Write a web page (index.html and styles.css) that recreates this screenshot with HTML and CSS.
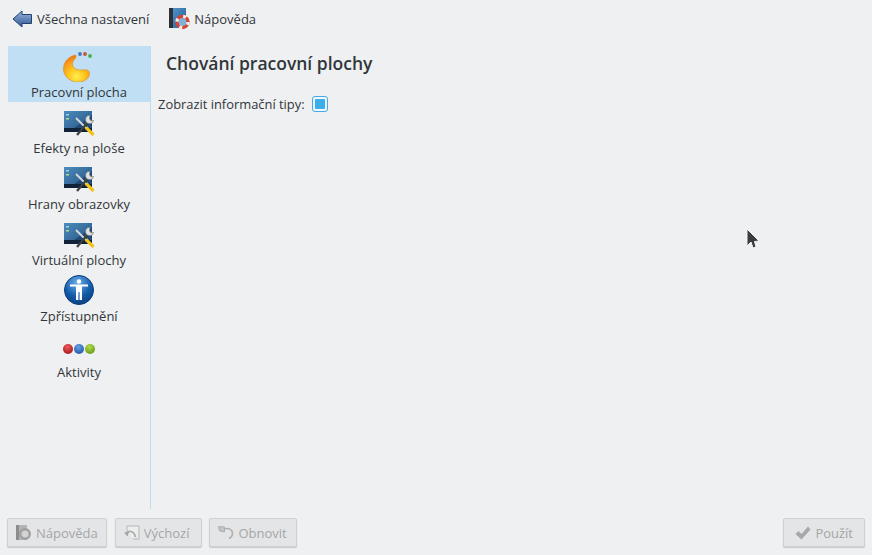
FILE: index.html
```html
<!DOCTYPE html>
<html lang="cs">
<head>
    <meta charset="UTF-8">
    <meta name="viewport" content="width=device-width, initial-scale=1.0">
    <title>Chování pracovní plochy</title>
    <link rel="stylesheet" href="styles.css">
</head>
<body>
    <svg class="defs" width="0" height="0">
        <defs>
            <linearGradient id="screenGrad" x1="0" y1="0" x2="1" y2="1">
                <stop offset="0" stop-color="#4c8cbf"/>
                <stop offset="1" stop-color="#24507c"/>
            </linearGradient>
            <radialGradient id="flame" cx="0.5" cy="0.8" r="0.75">
                <stop offset="0" stop-color="#fff04a"/>
                <stop offset="0.45" stop-color="#fdc21e"/>
                <stop offset="0.85" stop-color="#f8931a"/>
                <stop offset="1" stop-color="#ee7a12"/>
            </radialGradient>
            <radialGradient id="blueBall" cx="0.45" cy="0.25" r="0.85">
                <stop offset="0" stop-color="#6db0ec"/>
                <stop offset="0.55" stop-color="#125ba8"/>
                <stop offset="1" stop-color="#0a3a76"/>
            </radialGradient>
            <radialGradient id="redDot" cx="0.45" cy="0.3" r="0.8">
                <stop offset="0" stop-color="#ee5a5a"/>
                <stop offset="1" stop-color="#9c0f14"/>
            </radialGradient>
            <radialGradient id="blueDot" cx="0.45" cy="0.3" r="0.8">
                <stop offset="0" stop-color="#66a0e8"/>
                <stop offset="1" stop-color="#1a4fa0"/>
            </radialGradient>
            <radialGradient id="greenDot" cx="0.45" cy="0.3" r="0.8">
                <stop offset="0" stop-color="#b4dc4a"/>
                <stop offset="1" stop-color="#5c9410"/>
            </radialGradient>
            <linearGradient id="arrowGrad" x1="0" y1="0" x2="0" y2="1">
                <stop offset="0" stop-color="#9ab8e0"/>
                <stop offset="1" stop-color="#2f5590"/>
            </linearGradient>
            <linearGradient id="bookGrad" x1="0" y1="0" x2="1" y2="1">
                <stop offset="0" stop-color="#4d90c8"/>
                <stop offset="1" stop-color="#2a5f94"/>
            </linearGradient>
            <symbol id="tools" viewBox="0 0 32 26">
                <rect x="1" y="1" width="28" height="21" fill="url(#screenGrad)"/>
                <path d="M10 19 L29 5 V19 Z" fill="#1f4a74"/>
                <rect x="1" y="18" width="28" height="4" fill="#0f2238"/>
                <rect x="3" y="4" width="3" height="1.5" fill="#a8ccdc"/>
                <rect x="3" y="8" width="3" height="1.5" fill="#c7d67a"/>
                <path d="M13 8 L24 19" stroke="#d4d7d9" stroke-width="2"/>
                <path d="M14 25 L26 11" stroke="#3a3f43" stroke-width="2.2"/>
                <path d="M23 17.5 L30.5 25" stroke="#f2c21a" stroke-width="3.2"/>
                <path d="M27 5.5 a4 4 0 1 0 3.5 5 l-2.6 0.3 -1.4 -2.2 z" fill="#dfe1e2" stroke="#777c80" stroke-width="0.7"/>
            </symbol>
        </defs>
    </svg>

    <div class="toolbar">
        <div class="tool">
            <svg width="20" height="18" viewBox="0 0 20 18">
                <path d="M1 9 L10 1 V4.5 H19.5 V13.5 H10 V17 Z" fill="url(#arrowGrad)" stroke="#23406f" stroke-width="1"/>
            </svg>
            <span>Všechna nastavení</span>
        </div>
        <div class="tool">
            <svg class="help-icon" width="22" height="22" viewBox="0 0 22 22">
                <rect x="0" y="0" width="4" height="20" fill="#2c3238"/>
                <rect x="4" y="0" width="13" height="20" fill="url(#bookGrad)"/>
                <circle cx="13.5" cy="14" r="5.6" fill="#7fb0d6" stroke="#d8422e" stroke-width="3.2"/>
                <circle cx="13.5" cy="14" r="5.6" fill="none" stroke="#f4f0ea" stroke-width="3.2" stroke-dasharray="3 5.8"/>
            </svg>
            <span>Nápověda</span>
        </div>
    </div>

    <div class="main">
        <div class="sidebar">
            <div class="nav-item active">
                <svg width="32" height="32" viewBox="0 0 32 32">
                    <path d="M12 5 C5 7 0.5 12 0.5 19 C0.5 27 8 32 15 32 C22 32 26.5 28 26.5 23.5 C26.5 20 23.5 19.5 20 20 C15 20.5 10.5 19 9.5 15 C9 11 12.5 9 13 7 C13.2 6 13 5 12 5 Z" fill="url(#flame)" stroke="#e58316" stroke-width="0.6"/>
                    <circle cx="17" cy="4" r="1.9" fill="#3f78c4"/>
                    <circle cx="22" cy="4" r="1.9" fill="#c9532e"/>
                    <circle cx="27" cy="6" r="1.9" fill="#3fb24a"/>
                </svg>
                <span>Pracovní plocha</span>
            </div>
            <div class="nav-item">
                <svg width="32" height="26" class="tools-icon"><use href="#tools"/></svg>
                <span>Efekty na ploše</span>
            </div>
            <div class="nav-item">
                <svg width="32" height="26" class="tools-icon"><use href="#tools"/></svg>
                <span>Hrany obrazovky</span>
            </div>
            <div class="nav-item">
                <svg width="32" height="26" class="tools-icon"><use href="#tools"/></svg>
                <span>Virtuální plochy</span>
            </div>
            <div class="nav-item">
                <svg class="ball-icon" width="30" height="30" viewBox="0 0 30 30">
                    <circle cx="15" cy="15" r="14.5" fill="url(#blueBall)" stroke="#0b3c78"/>
                    <circle cx="15" cy="6.5" r="2.2" fill="#fff"/>
                    <path d="M6 9.5 H24 V11.5 H18 V25 H15.6 V17 H14.4 V25 H12 V11.5 H6 Z" fill="#fff"/>
                </svg>
                <span>Zpřístupnění</span>
            </div>
            <div class="nav-item">
                <svg width="32" height="32" viewBox="0 0 32 32">
                    <circle cx="5" cy="19" r="5" fill="url(#redDot)"/>
                    <circle cx="16" cy="19" r="5" fill="url(#blueDot)"/>
                    <circle cx="27" cy="19" r="5" fill="url(#greenDot)"/>
                </svg>
                <span>Aktivity</span>
            </div>
        </div>

        <div class="content">
            <h1>Chování pracovní plochy</h1>
            <div class="option">
                <span>Zobrazit informační tipy:</span>
                <span class="checkbox"><span class="check-fill"></span></span>
            </div>
        </div>
    </div>

    <div class="footer">
        <div class="footer-group">
            <div class="btn btn-help">
                <svg width="16" height="16" viewBox="0 0 16 16">
                    <rect x="0" y="0" width="3" height="15" fill="#8c8c8c"/>
                    <rect x="3" y="0" width="8" height="15" fill="#b4b4b4"/>
                    <circle cx="9" cy="9" r="4.8" fill="#d4d4d4" stroke="#a0a0a0" stroke-width="2.4"/>
                </svg>
                <span>Nápověda</span>
            </div>
            <div class="btn btn-default">
                <svg width="16" height="16" viewBox="0 0 16 16">
                    <path d="M3 6 V1 H15 V14 H9" fill="#eceded" stroke="#b5b5b5"/>
                    <path d="M1.5 9 C4 5 10 5.5 11.5 12" fill="none" stroke="#a6a6a6" stroke-width="1.6"/>
                    <path d="M0 7.5 L5 7 L3.5 11.5 Z" fill="#a6a6a6"/>
                </svg>
                <span>Výchozí</span>
            </div>
            <div class="btn btn-restore">
                <svg width="16" height="16" viewBox="0 0 16 16">
                    <path d="M5 4.5 C10 2 15 4.5 14.5 9 C14.3 11 13 12.5 11 13.5" fill="none" stroke="#b0b0b0" stroke-width="1.6"/>
                    <path d="M0.5 1.5 L6.5 2 L6.5 7 L1.5 6 Z" fill="#c4c4c4" stroke="#a6a6a6" stroke-width="0.8"/>
                </svg>
                <span>Obnovit</span>
            </div>
        </div>
        <div class="btn btn-apply">
            <svg width="16" height="14" viewBox="0 0 16 14">
                <path d="M0.5 8 L3.5 5 L6.5 8 L13 0.5 L15.5 3.5 L6.5 13.5 Z" fill="#a8a8a8"/>
            </svg>
            <span>Použít</span>
        </div>
    </div>

    <svg class="cursor" width="14" height="22" viewBox="0 0 14 22">
        <path d="M1 1 V18 L5 14 L7 20 L10 19 L8.5 13.5 L13 13 Z" fill="#3c3c3c" stroke="#f4f4f4" stroke-width="1"/>
    </svg>
</body>
</html>
```

FILE: styles.css
```css
* {
    margin: 0;
    padding: 0;
    box-sizing: border-box;
}

html, body {
    height: 100%;
}

body {
    font-family: "Open Sans", "Noto Sans", sans-serif;
    font-size: 13px;
    color: #31363b;
    background: #eff0f1;
    display: flex;
    flex-direction: column;
    overflow: hidden;
}

.defs {
    position: absolute;
}

.toolbar {
    height: 38px;
    padding: 0 0 0 12px;
    display: flex;
    align-items: center;
    gap: 20px;
}

.tool {
    display: flex;
    align-items: center;
    gap: 5px;
}

.tool .help-icon {
    margin-right: -2px;
}

.main {
    flex: 1;
    display: flex;
    padding: 8px 0 0 8px;
}

.sidebar {
    width: 143px;
    height: 463px;
    border-right: 1px solid #bcdcf0;
}

.nav-item {
    height: 56px;
    display: flex;
    flex-direction: column;
    align-items: center;
    justify-content: flex-end;
    padding-bottom: 1px;
    line-height: 18px;
}

.nav-item svg {
    margin-bottom: 1px;
}

.nav-item .tools-icon {
    margin-bottom: 3px;
}

.nav-item .ball-icon {
    margin-bottom: 2px;
}

.nav-item.active {
    background: #c0def4;
}

.content {
    flex: 1;
    padding: 4px 0 0 7px;
}

h1 {
    font-size: 17.5px;
    font-weight: 600;
    color: #31363b;
    line-height: 26px;
    padding-left: 8px;
    margin-bottom: 19px;
}

.option {
    display: flex;
    align-items: center;
    gap: 7px;
}

.option > span:first-child {
    font-size: 12.9px;
}

.checkbox {
    width: 16px;
    height: 16px;
    border: 1px solid #3daee9;
    border-radius: 3px;
    background: #f4f6f7;
    display: flex;
    align-items: center;
    justify-content: center;
}

.check-fill {
    width: 10px;
    height: 10px;
    background: #3daee9;
    border-radius: 1px;
}

.footer {
    height: 46px;
    padding: 9px 7px 8px 7px;
    display: flex;
    justify-content: space-between;
}

.footer-group {
    display: flex;
    gap: 7px;
}

.btn {
    height: 29px;
    padding: 0 10px 0 8px;
    display: flex;
    align-items: center;
    gap: 4px;
    color: #a4a6a8;
    background: #e4e5e6;
    border: 1px solid #cfd0d2;
    border-radius: 2px;
    box-shadow: 0 1px 1px #c8c9ca;
}

.btn-help {
    padding-right: 8px;
    margin-right: 1px;
}

.btn-default {
    padding-right: 12px;
}

.btn-restore {
    padding-right: 9px;
}

.btn-apply {
    padding: 0 11px 0 11px;
}

.cursor {
    position: absolute;
    left: 746px;
    top: 228px;
}
```
